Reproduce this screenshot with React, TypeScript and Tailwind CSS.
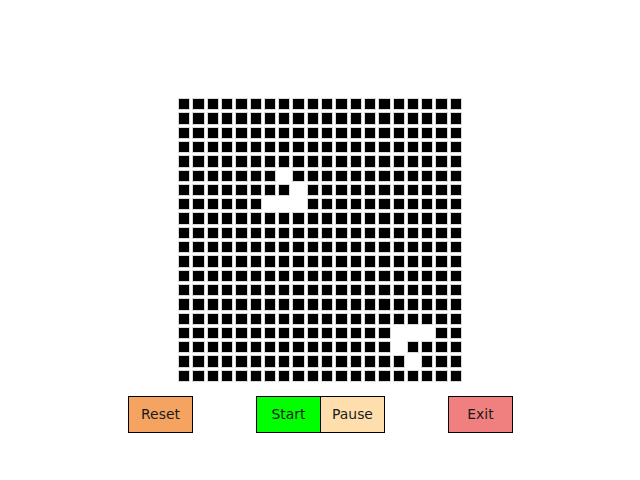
import React from 'react';

const SIZE = 20;
// alive cells (drawn white)
const ALIVE = new Set([
    '5,7', '6,8', '7,6', '7,7', '7,8',
    '16,15', '16,16', '16,17', '17,15', '18,16',
]);

function Cell({ alive }: { alive: boolean }) {
    if (alive) return <div className="bg-white" />;
    return <div className="bg-black border border-[#d9d9d9]" />;
}

function Btn({ label, color }: { label: string; color: string }) {
    return (
        <button className={`w-[65px] h-[37px] border border-black text-[13.9px] text-[#1a1a1a] ${color}`}>
            {label}
        </button>
    );
}

export default function App() {
    const rows = Array.from({ length: SIZE }, (_, r) => r);

    return (
        <div className="w-[640px] h-[480px] bg-white flex flex-col items-center pt-[98px] font-['DejaVu_Sans',sans-serif]">
            <div className="w-[284px] h-[284px] grid grid-cols-[repeat(20,1fr)] grid-rows-[repeat(20,1fr)] gap-[2px]">
                {rows.map((r) =>
                    rows.map((c) => <Cell key={`${r}-${c}`} alive={ALIVE.has(`${r},${c}`)} />)
                )}
            </div>

            <div className="w-[385px] ml-px mt-[14px] flex justify-between">
                <Btn label="Reset" color="bg-[#f4a460]" />
                <div className="flex">
                    <Btn label="Start" color="bg-[#00ff00]" />
                    <Btn label="Pause" color="bg-[#ffdead] -ml-px" />
                </div>
                <Btn label="Exit" color="bg-[#f08080]" />
            </div>
        </div>
    );
}
